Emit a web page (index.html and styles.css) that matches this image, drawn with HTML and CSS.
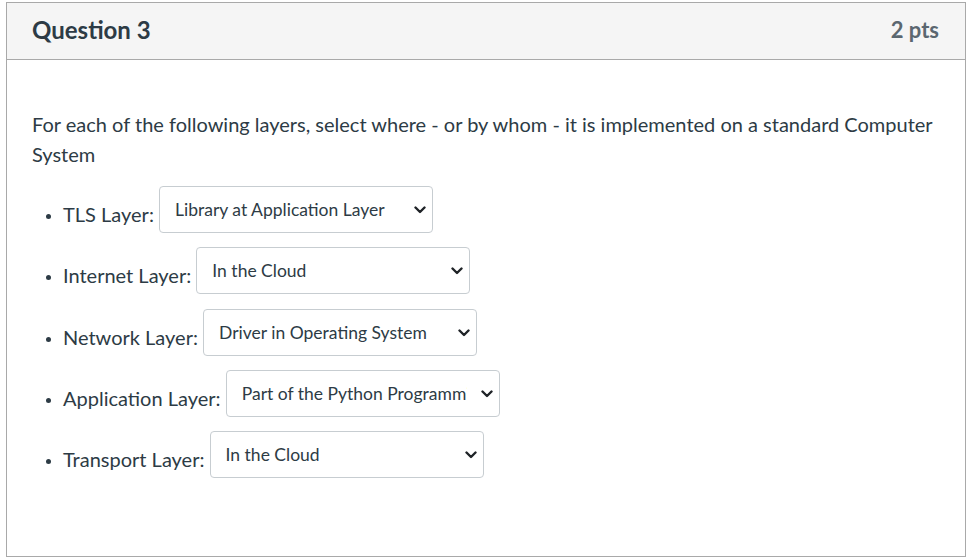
FILE: index.html
```html
<!DOCTYPE html>
<html>
<head>
<meta charset="utf-8">
<link rel="stylesheet" href="styles.css">
</head>
<body>
<div class="question">
  <div class="q-header">
    <h2 class="q-title">Question 3</h2>
    <span class="q-points">2 pts</span>
  </div>
  <div class="q-body">
    <p class="q-text">For each of the following layers, select where - or by whom - it is implemented on a standard Computer System</p>
    <ul class="q-list">
      <li class="q-item">TLS Layer: <span class="q-wrap"><select class="q-select"><option>Library at Application Layer</option></select><svg class="q-chev" width="12" height="8" viewBox="0 0 12 8"><path d="M1.5 1.5 L6 6 L10.5 1.5" fill="none" stroke="#1f2327" stroke-width="2.4" stroke-linecap="round" stroke-linejoin="round"/></svg></span></li>
      <li class="q-item">Internet Layer: <span class="q-wrap"><select class="q-select"><option>In the Cloud</option></select><svg class="q-chev" width="12" height="8" viewBox="0 0 12 8"><path d="M1.5 1.5 L6 6 L10.5 1.5" fill="none" stroke="#1f2327" stroke-width="2.4" stroke-linecap="round" stroke-linejoin="round"/></svg></span></li>
      <li class="q-item">Network Layer: <span class="q-wrap"><select class="q-select"><option>Driver in Operating System</option></select><svg class="q-chev" width="12" height="8" viewBox="0 0 12 8"><path d="M1.5 1.5 L6 6 L10.5 1.5" fill="none" stroke="#1f2327" stroke-width="2.4" stroke-linecap="round" stroke-linejoin="round"/></svg></span></li>
      <li class="q-item">Application Layer: <span class="q-wrap"><select class="q-select"><option>Part of the Python Programming Language</option></select><svg class="q-chev" width="12" height="8" viewBox="0 0 12 8"><path d="M1.5 1.5 L6 6 L10.5 1.5" fill="none" stroke="#1f2327" stroke-width="2.4" stroke-linecap="round" stroke-linejoin="round"/></svg></span></li>
      <li class="q-item">Transport Layer: <span class="q-wrap"><select class="q-select"><option>In the Cloud</option></select><svg class="q-chev" width="12" height="8" viewBox="0 0 12 8"><path d="M1.5 1.5 L6 6 L10.5 1.5" fill="none" stroke="#1f2327" stroke-width="2.4" stroke-linecap="round" stroke-linejoin="round"/></svg></span></li>
    </ul>
  </div>
</div>
</body>
</html>
```
FILE: styles.css
```css
html, body {
  margin: 0;
  padding: 0;
  background: #fff;
}
body {
  font-family: Lato, "Open Sans", sans-serif;
  color: #2d3b45;
}
.question {
  margin: 2px 0 0 6px;
  width: 960px;
  height: 555px;
  box-sizing: border-box;
  border: 1px solid #a9a9a9;
}
.q-header {
  background: #f5f5f5;
  border-bottom: 1px solid #a9a9a9;
  display: flex;
  align-items: center;
  justify-content: space-between;
  padding: 0 26px 3px 25px;
  box-sizing: border-box;
  height: 57px;
}
.q-title {
  margin: 0;
  font-size: 24px;
  font-weight: 700;
  color: #2d3b45;
}
.q-points {
  font-size: 22px;
  font-weight: 700;
  color: #5b6770;
}
.q-body {
  padding: 49px 25px 0 25px;
}
.q-text {
  margin: 0 0 17px 0;
  font-size: 20px;
  line-height: 30px;
}
.q-list {
  margin: 0;
  padding-left: 31px;
  font-size: 20px;
}
.q-item {
  margin-bottom: 9.3px;
  line-height: 47px;
}
.q-item::marker {
  font-size: 15px;
}
.q-wrap {
  position: relative;
  display: inline-block;
  vertical-align: 6px;
  line-height: normal;
}
.q-select {
  display: block;
  appearance: none;
  -webkit-appearance: none;
  width: 274px;
  height: 47px;
  font-family: Lato, "Open Sans", sans-serif;
  font-size: 17.5px;
  color: #2d3b45;
  background: #fff;
  border: 1px solid #c7cdd1;
  border-radius: 4px;
  padding: 0 32px 0 15px;
  margin: 0;
}
.q-chev {
  position: absolute;
  right: 7px;
  top: 20px;
  pointer-events: none;
}
```
